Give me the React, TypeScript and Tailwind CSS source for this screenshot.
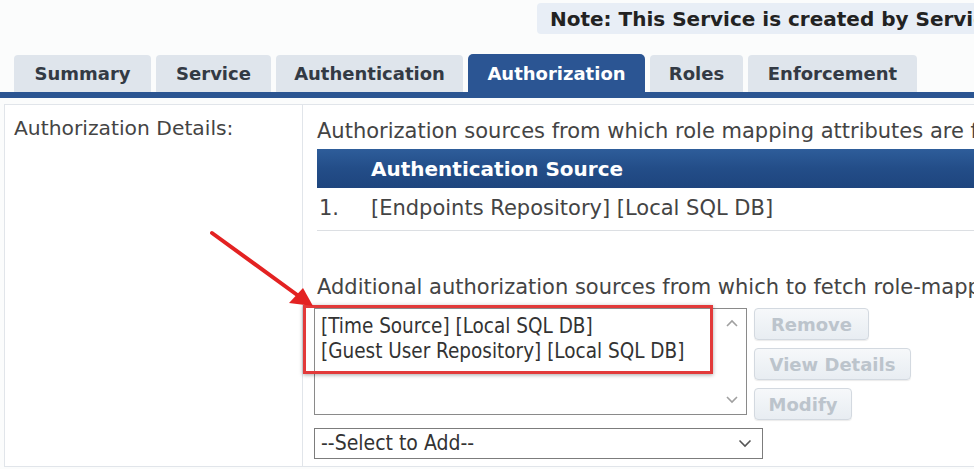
import React from "react";

const tabs = ["Summary", "Service", "Authentication", "Authorization", "Roles", "Enforcement"];
const tabW = [137, 115, 187, 177, 93, 169];

export default function App() {
  return (
    <div
      className="relative w-[974px] h-[469px] overflow-hidden bg-[#fbfcfc] text-[#3a3a3a]"
      style={{ fontFamily: '"DejaVu Sans", Verdana, sans-serif' }}
    >
      {/* Note */}
      <div className="pt-[3px] pl-[537px]">
        <div className="w-[700px] h-[31px] bg-[#e8eef6] rounded-l-[4px] pl-[13px] flex items-center whitespace-nowrap text-[20px] font-bold text-[#222]">
          Note: This Service is created by Service Templates
        </div>
      </div>

      {/* Tabs */}
      <div className="mt-[20px] pl-[14px] flex gap-[5px] items-end">
        {tabs.map((t, i) => (
          <div
            key={t}
            style={{ width: tabW[i] }}
            className={
              t === "Authorization"
                ? "shrink-0 h-[38px] rounded-t-[5px] bg-[#2b5593] text-white text-[18px] font-bold flex items-center justify-center"
                : "shrink-0 h-[37px] rounded-t-[4px] bg-[#dfe5ec] text-[#333a44] text-[18px] font-bold flex items-center justify-center"
            }
          >
            {t}
          </div>
        ))}
      </div>
      <div className="h-[6px] bg-[#2b5592]" />

      {/* Panel */}
      <div className="mt-[6px] ml-[4px] w-[1100px] h-[363px] border border-[#e1e5ea] flex bg-white">
        <div className="w-[298px] shrink-0 border-r border-[#e1e5ea] pl-[9px] pt-[10px] text-[20.3px] leading-[26px] text-[#444] whitespace-nowrap">
          Authorization Details:
        </div>
        <div className="flex-1 min-w-0 pl-[14px] pt-[13px] text-[21px] text-[#444]">
          <div className="whitespace-nowrap leading-[26px]">
            Authorization sources from which role mapping attributes are fetched (with Authentication sources)
          </div>
          <div className="mt-[5px] h-[39px] bg-gradient-to-b from-[#2e5d9a] via-[#234d88] to-[#1e457e] flex items-center pl-[54px] text-white font-bold text-[20px] whitespace-nowrap">
            Authentication Source
          </div>
          <div className="h-[43px] border-b border-[#dcdfe3] flex items-center whitespace-nowrap text-[21px]">
            <span className="w-[54px] pl-[2px]">1.</span>
            <span>[Endpoints Repository] [Local SQL DB]</span>
          </div>
          <div className="mt-[43px] whitespace-nowrap leading-[26px]">
            Additional authorization sources from which to fetch role-mapping attributes
          </div>
          <div className="mt-[8px] ml-[-3px] flex items-start gap-[7px]">
            <div
              className="relative w-[433px] h-[107px] border border-[#8a8a8a] bg-white pl-[6px] pt-[5px] text-[20.5px] text-[#333] leading-[25px] whitespace-nowrap"
              style={{ fontFamily: '"DejaVu Sans Condensed", "Liberation Sans", sans-serif' }}
            >
              <div>[Time Source] [Local SQL DB]</div>
              <div>[Guest User Repository] [Local SQL DB]</div>
              <svg className="absolute right-[8px] top-[10px]" width="12" height="8" viewBox="0 0 12 8">
                <path d="M1 7 L6 2 L11 7" fill="none" stroke="#a0a0a0" strokeWidth="1.6" />
              </svg>
              <svg className="absolute right-[8px] bottom-[10px]" width="12" height="8" viewBox="0 0 12 8">
                <path d="M1 1 L6 6 L11 1" fill="none" stroke="#a0a0a0" strokeWidth="1.6" />
              </svg>
            </div>
            <div className="flex flex-col gap-[8px] items-start">
              {[
                ["Remove", "w-[115px]"],
                ["View Details", "w-[157px]"],
                ["Modify", "w-[98px]"],
              ].map(([label, w]) => (
                <div
                  key={label}
                  className={`${w} h-[32px] rounded-[4px] border border-[#d3d9e0] bg-gradient-to-b from-[#f6f8fa] to-[#e8edf2] shadow-[0_1px_1px_rgba(0,0,0,0.08)] flex items-center justify-center text-[18px] font-bold text-[#bcc4cc] whitespace-nowrap`}
                >
                  {label}
                </div>
              ))}
            </div>
          </div>
          <div
            className="mt-[8px] ml-[-3px] w-[449px] h-[31px] border border-[#7c7c7c] bg-white flex items-center justify-between pl-[6px] pr-[10px] text-[21px] text-[#333]"
            style={{ fontFamily: '"DejaVu Sans Condensed", "Liberation Sans", sans-serif' }}
          >
            <span>--Select to Add--</span>
            <svg width="14" height="9" viewBox="0 0 14 9">
              <path d="M1.5 1.5 L7 7 L12.5 1.5" fill="none" stroke="#555" strokeWidth="1.6" />
            </svg>
          </div>
        </div>
      </div>

      {/* Red highlight box */}
      <div className="absolute left-[303px] top-[305px] w-[410px] h-[69px] border-[3px] border-[#e23a3a] shadow-[0_1px_4px_rgba(0,0,0,0.35)]" />

      {/* Red arrow */}
      <svg className="absolute left-0 top-0" width="974" height="469" viewBox="0 0 974 469">
        <line x1="212" y1="233" x2="300" y2="297" stroke="#e32222" strokeWidth="4" strokeLinecap="round" />
        <polygon points="313,306 289,303 303,288" fill="#e32222" />
      </svg>
    </div>
  );
}
